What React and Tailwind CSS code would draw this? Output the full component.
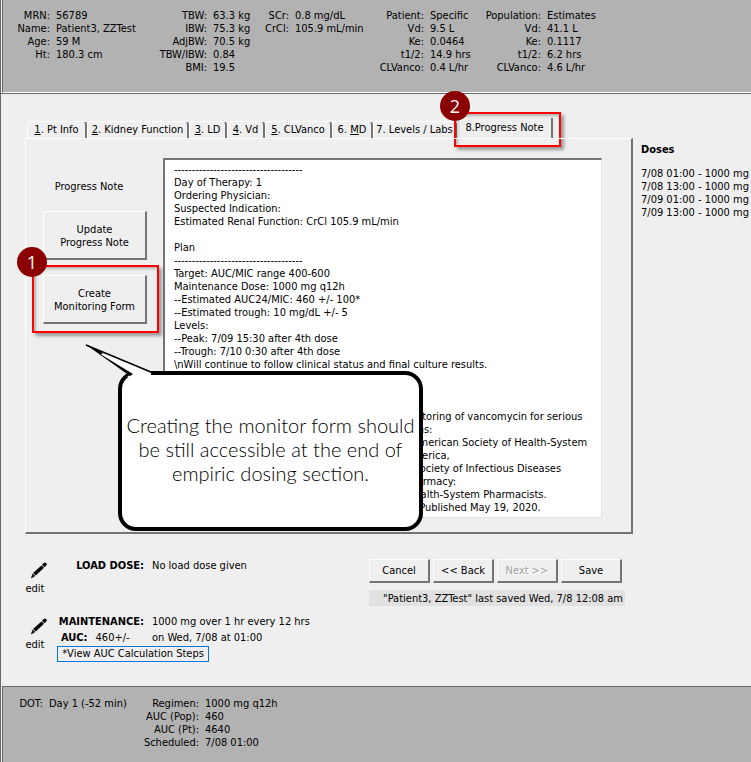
import React from 'react';

const raised =
  'border-t border-l border-r-2 border-b-2 border-t-white border-l-white border-r-[#747474] border-b-[#747474]';

const headerGroups = [
  {
    cols: 'w-[145px] grid-cols-[40px_auto]',
    rows: [['MRN:', '56789'], ['Name:', 'Patient3, ZZTest'], ['Age:', '59 M'], ['Ht:', '180.3 cm']],
  },
  {
    cols: 'w-[108px] grid-cols-[52px_auto]',
    rows: [['TBW:', '63.3 kg'], ['IBW:', '75.3 kg'], ['AdjBW:', '70.5 kg'], ['TBW/IBW:', '0.84'], ['BMI:', '19.5']],
  },
  {
    cols: 'w-[116px] grid-cols-[26px_auto]',
    rows: [['SCr:', '0.8 mg/dL'], ['CrCl:', '105.9 mL/min']],
  },
  {
    cols: 'w-[107px] grid-cols-[45px_auto]',
    rows: [['Patient:', 'Specific'], ['Vd:', '9.5 L'], ['Ke:', '0.0464'], ['t1/2:', '14.9 hrs'], ['CLVanco:', '0.4 L/hr']],
  },
  {
    cols: 'w-[120px] grid-cols-[55px_auto]',
    rows: [['Population:', 'Estimates'], ['Vd:', '41.1 L'], ['Ke:', '0.1117'], ['t1/2:', '6.2 hrs'], ['CLVanco:', '4.6 L/hr']],
  },
];

const tabs = [
  { pre: '', key: '1', post: '. Pt Info', width: 'w-[60px]' },
  { pre: '', key: '2', post: '. Kidney Function', width: 'w-[102px]' },
  { pre: '', key: '3', post: '. LD', width: 'w-[38px]' },
  { pre: '', key: '4', post: '. Vd', width: 'w-[38px]' },
  { pre: '', key: '5', post: '. CLVanco', width: 'w-[67px]' },
  { pre: '6. ', key: 'M', post: 'D', width: 'w-[41px]' },
  { pre: '7. Levels / Labs', key: '', post: '', width: 'w-[84px]' },
];

const doses = ['7/08 01:00 - 1000 mg', '7/08 13:00 - 1000 mg', '7/09 01:00 - 1000 mg', '7/09 13:00 - 1000 mg'];

const note = `------------------------------------
Day of Therapy: 1
Ordering Physician:
Suspected Indication:
Estimated Renal Function: CrCl 105.9 mL/min

Plan
------------------------------------
Target: AUC/MIC range 400-600
Maintenance Dose: 1000 mg q12h
--Estimated AUC24/MIC: 460 +/- 100*
--Estimated trough: 10 mg/dL +/- 5
Levels:
--Peak: 7/09 15:30 after 4th dose
--Trough: 7/10 0:30 after 4th dose
\\nWill continue to follow clinical status and final culture results.



*Rybak MJ, Le J, Lodise TP, et al. Therapeutic monitoring of vancomycin for serious
and in methicillin-resistant Staph. aureus infections:
Revised consensus guideline and review by the American Society of Health-System
Pharmacists, the Infectious Disease Society of America,
& Pediatric Infectious Diseases Society, and the Society of Infectious Diseases
Pharmacists. American Journal of Health-Syst. Pharmacy:
The official journal for the American Society of Health-System Pharmacists.
AJHP, vol 77, issue 11, June 2020, page 835-864. Published May 19, 2020.`;

function Facts({ cols, rows }) {
  return (
    <dl className={`grid shrink-0 content-start gap-x-[6px] ${cols}`}>
      {rows.map(([label, value]) => (
        <React.Fragment key={label}>
          <dt className="flex justify-end">{label}</dt>
          <dd>{value}</dd>
        </React.Fragment>
      ))}
    </dl>
  );
}

function Badge({ children, place }) {
  return (
    <span
      className={`absolute z-10 flex size-[30px] items-center justify-center rounded-full bg-[#8b0000] font-['Open_Sans',sans-serif] text-[18px] text-white ${place}`}
    >
      {children}
    </span>
  );
}

function Highlight({ place }) {
  return (
    <span
      className={`pointer-events-none absolute border-2 border-[#fe0000] shadow-[3px_3px_3px_rgba(0,0,0,0.35),inset_2px_2px_3px_rgba(0,0,0,0.25)] ${place}`}
    />
  );
}

function EditButton() {
  return (
    <button type="button" className="flex w-5 flex-col items-center gap-[3px]">
      <svg viewBox="0 0 16 17" className="ml-2 h-[17px] w-4" aria-hidden="true">
        <path d="M11 2.8 L12.8 1 Q14 0 15.2 1.1 Q16.3 2.4 15.2 3.5 L13.4 5.2 Z" fill="#000" />
        <path d="M10.4 3.4 L13 5.7 L4.8 13.6 L2 11 Z" fill="#000" />
        <path d="M1.6 11.5 L4.3 14 L1.6 15.8 L0.1 16.3 L0.4 14.7 Z" fill="#000" />
        <path d="M1.8 13.5 L2.5 14.1" stroke="#efefef" strokeWidth="0.8" />
      </svg>
      <span>edit</span>
    </button>
  );
}

export default function App() {
  return (
    <div className="flex min-h-screen flex-col border-l border-[#696969] bg-[#efefef] font-['DejaVu_Sans_Condensed','Noto_Sans',sans-serif] text-[11px] leading-[13px] whitespace-nowrap text-black">
      <header className="border-b border-[#696969]">
        <div className="ml-px flex h-[93px] border-b border-l border-b-white border-l-[#696969] bg-[#b2b2b2] pt-[9px] pl-[7px]">
          {headerGroups.map((g) => (
            <Facts key={g.cols} {...g} />
          ))}
        </div>
      </header>

      <main className="flex-1 pt-[25px] pl-6">
        <div className="flex">
          <section className="min-w-0 flex-1">
            <div role="tablist" className="flex h-[19px] items-end pl-[2px]">
              {tabs.map((t) => (
                <button
                  key={t.post + t.pre}
                  type="button"
                  role="tab"
                  aria-selected="false"
                  className={`h-[17px] shrink-0 rounded-t-sm border-t border-r-2 border-l border-t-white border-r-[#747474] border-l-white pb-[2px] text-center ${t.width}`}
                >
                  {t.pre}
                  <span className="underline">{t.key}</span>
                  {t.post}
                </button>
              ))}
              <div className="relative h-5 w-[96px] shrink-0">
                <button
                  type="button"
                  role="tab"
                  aria-selected="true"
                  className="h-5 w-full border-r-2 border-l border-r-[#747474] border-l-white bg-[#efefef] pb-[2px]"
                >
                  8.Progress Note
                </button>
                <Highlight place="-top-[6px] -right-[8px] -bottom-[9px] -left-[3px]" />
                <Badge place="-top-[27px] -left-[17px]">2</Badge>
              </div>
            </div>

            <div
              role="tabpanel"
              className="relative flex gap-4 border-t border-r-2 border-b-2 border-l border-t-white border-r-[#747474] border-b-[#747474] border-l-white pt-[19px] pr-[29px] pb-[14px] pl-[17px]"
            >
              <div className="flex w-[104px] shrink-0 flex-col">
                <label htmlFor="note" className="mt-[22px] mr-3 text-center">
                  Progress Note
                </label>
                <button type="button" className={`mt-[18px] h-[49px] pt-[2px] ${raised}`}>
                  Update
                  <br />
                  Progress Note
                </button>
                <div className="relative mt-[15px]">
                  <button type="button" className={`h-[49px] w-full pt-[2px] ${raised}`}>
                    Create
                    <br />
                    Monitoring Form
                  </button>
                  <Highlight place="-top-[10px] -right-[12px] -bottom-[9px] -left-[11px]" />
                  <Badge place="-top-[28px] -left-[26px]">1</Badge>
                </div>
              </div>
              <textarea
                id="note"
                rows={27}
                defaultValue={note}
                className="block h-[360px] min-w-0 flex-1 resize-none overflow-hidden border-t-2 border-r border-b border-l-2 border-t-[#747474] border-r-[#e3e3e3] border-b-[#e3e3e3] border-l-[#747474] bg-white py-[3px] pl-[9px] whitespace-pre outline-none"
              />

              <aside className="absolute top-[232px] left-[92px] flex h-[160px] w-[305px] items-center justify-center rounded-[18px] border-4 border-black bg-white pb-1 text-center font-['Lato',sans-serif] text-[20px] leading-6 font-light">
                <svg
                  viewBox="0 0 70 34"
                  className="absolute -top-[31px] -left-[37px] h-[34px] w-[70px] overflow-visible"
                  aria-hidden="true"
                >
                  <path d="M1 1 L46 30 L42 33 L66 33 L66 28 Z" fill="#fff" />
                  <path d="M0 0 L18 9 L16 10.5 L48 30 L45 32 Z" fill="#000" />
                  <path d="M1 1 L67 28.5" fill="none" stroke="#000" strokeWidth="1.5" />
                </svg>
                <p>
                  Creating the monitor form should
                  <br />
                  be still accessible at the end of
                  <br />
                  empiric dosing section.
                </p>
              </aside>
            </div>
          </section>

          <section className="w-[118px] shrink-0 pt-6 pl-2">
            <h2 className="font-bold">Doses</h2>
            <ul className="mt-[11px]">
              {doses.map((d) => (
                <li key={d}>{d}</li>
              ))}
            </ul>
          </section>
        </div>

        <div className="flex pt-[25px]">
          <div className="w-[344px] shrink-0">
            <div className="flex h-14">
              <div className="pt-[3px]">
                <EditButton />
              </div>
              <div className="grid grid-cols-[92px_auto] content-start gap-x-2 pl-[7px]">
                <strong className="flex justify-end">LOAD DOSE:</strong>
                <span>No load dose given</span>
              </div>
            </div>
            <div className="flex">
              <div className="pt-[3px]">
                <EditButton />
              </div>
              <div className="pl-[7px]">
                <div className="grid grid-cols-[92px_auto] gap-x-2 gap-y-[3px]">
                  <strong className="flex justify-end">MAINTENANCE:</strong>
                  <span>1000 mg over 1 hr every 12 hrs</span>
                  <span className="flex gap-2 pl-[9px]">
                    <strong>AUC:</strong>
                    <span>460+/-</span>
                  </span>
                  <span>on Wed, 7/08 at 01:00</span>
                </div>
                <button type="button" className="mt-[2px] ml-[5px] h-4 w-[152px] border border-[#0078d7] leading-[14px]">
                  *View AUC Calculation Steps
                </button>
              </div>
            </div>
          </div>

          <div className="flex w-[256px] flex-col gap-[7px]">
            <div className="flex gap-[3px]">
              {['Cancel', '<< Back', 'Next >>', 'Save'].map((b) => (
                <button
                  key={b}
                  type="button"
                  disabled={b === 'Next >>'}
                  className={`h-6 w-[61px] disabled:text-[#a0a0a0] disabled:[text-shadow:1px_1px_0_#fff] ${raised}`}
                >
                  {b}
                </button>
              ))}
            </div>
            <p className="flex h-4 items-center justify-end bg-[#e1e1e1] pr-[2px]">
              "Patient3, ZZTest" last saved Wed, 7/8 12:08 am
            </p>
          </div>
        </div>
      </main>

      <footer className="ml-px flex h-[76px] border-t border-l border-[#696969] bg-[#b2b2b2] pt-[10px] pl-[7px]">
        <Facts cols="w-[131px] grid-cols-[33px_auto]" rows={[['DOT:', 'Day 1 (-52 min)']]} />
        <Facts
          cols="w-[200px] grid-cols-[58px_auto]"
          rows={[['Regimen:', '1000 mg q12h'], ['AUC (Pop):', '460'], ['AUC (Pt):', '4640'], ['Scheduled:', '7/08 01:00']]}
        />
      </footer>
    </div>
  );
}
